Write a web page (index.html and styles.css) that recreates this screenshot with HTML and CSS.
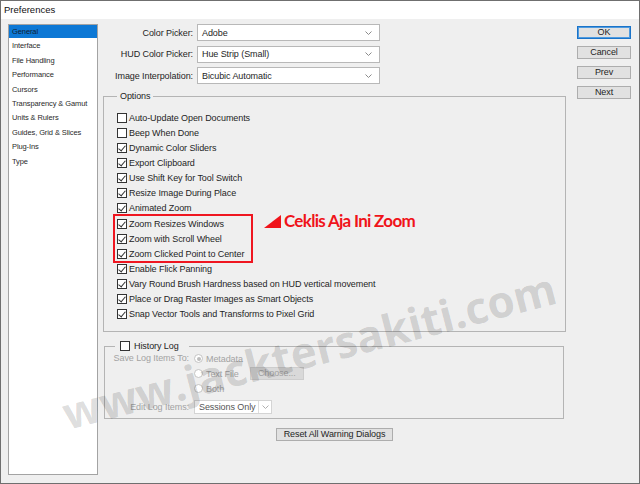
FILE: index.html
```
<!DOCTYPE html>
<html>
<head>
<meta charset="utf-8">
<title>Preferences</title>
<link rel="stylesheet" href="styles.css">
</head>
<body>
<div class="window">
  <div class="titlebar">Preferences</div>
  <div class="body">
    <ul class="nav">
      <li class="sel">General</li>
      <li>Interface</li>
      <li>File Handling</li>
      <li>Performance</li>
      <li>Cursors</li>
      <li>Transparency &amp; Gamut</li>
      <li>Units &amp; Rulers</li>
      <li>Guides, Grid &amp; Slices</li>
      <li>Plug-Ins</li>
      <li>Type</li>
    </ul>
    <div class="main">
      <div class="fields">
        <div class="field"><span class="flabel">Color Picker:</span><div class="select"><span>Adobe</span><svg class="chev" width="7" height="4" viewBox="0 0 7 4"><path d="M0.5 0.5 L3.5 3.5 L6.5 0.5" fill="none" stroke="#8a8a8a" stroke-width="1"/></svg></div></div>
        <div class="field"><span class="flabel">HUD Color Picker:</span><div class="select"><span>Hue Strip (Small)</span><svg class="chev" width="7" height="4" viewBox="0 0 7 4"><path d="M0.5 0.5 L3.5 3.5 L6.5 0.5" fill="none" stroke="#8a8a8a" stroke-width="1"/></svg></div></div>
        <div class="field"><span class="flabel">Image Interpolation:</span><div class="select"><span>Bicubic Automatic</span><svg class="chev" width="7" height="4" viewBox="0 0 7 4"><path d="M0.5 0.5 L3.5 3.5 L6.5 0.5" fill="none" stroke="#8a8a8a" stroke-width="1"/></svg></div></div>
      </div>
      <fieldset class="options">
        <legend>Options</legend>
        <div class="row"><span class="cb"></span>Auto-Update Open Documents</div>
        <div class="row"><span class="cb"></span>Beep When Done</div>
        <div class="row"><span class="cb on"></span>Dynamic Color Sliders</div>
        <div class="row"><span class="cb on"></span>Export Clipboard</div>
        <div class="row"><span class="cb on"></span>Use Shift Key for Tool Switch</div>
        <div class="row"><span class="cb on"></span>Resize Image During Place</div>
        <div class="row"><span class="cb on"></span>Animated Zoom</div>
        <div class="mark">
          <div class="row"><span class="cb on"></span>Zoom Resizes Windows</div>
          <div class="row"><span class="cb on"></span>Zoom with Scroll Wheel</div>
          <div class="row"><span class="cb on"></span>Zoom Clicked Point to Center</div>
          <div class="note"><svg width="18" height="14" viewBox="0 0 18 14"><path d="M0 13 L17 0 L17 13 Z" fill="#f0131a"/></svg><span>Ceklis Aja Ini Zoom</span></div>
        </div>
        <div class="row"><span class="cb on"></span>Enable Flick Panning</div>
        <div class="row"><span class="cb on"></span>Vary Round Brush Hardness based on HUD vertical movement</div>
        <div class="row"><span class="cb on"></span>Place or Drag Raster Images as Smart Objects</div>
        <div class="row"><span class="cb on"></span>Snap Vector Tools and Transforms to Pixel Grid</div>
      </fieldset>
      <fieldset class="history">
        <legend><span class="cb"></span>History Log</legend>
        <div class="hgrid">
          <span class="hlabel">Save Log Items To:</span>
          <div class="radios">
            <div class="rrow"><span class="radio on"></span>Metadata</div>
            <div class="rrow"><span class="radio"></span>Text File<span class="choose">Choose...</span></div>
            <div class="rrow"><span class="radio"></span>Both</div>
          </div>
          <span class="hlabel edit">Edit Log Items:</span>
          <div class="sselect edit"><span>Sessions Only</span><span class="sdrop"><svg width="7" height="4" viewBox="0 0 7 4"><path d="M0.5 0.5 L3.5 3.5 L6.5 0.5" fill="none" stroke="#b0b0b0" stroke-width="1"/></svg></span></div>
        </div>
      </fieldset>
      <div class="resetwrap"><span class="btn reset">Reset All Warning Dialogs</span></div>
    </div>
    <div class="buttons">
      <span class="btn ok">OK</span>
      <span class="btn">Cancel</span>
      <span class="btn">Prev</span>
      <span class="btn">Next</span>
    </div>
  </div>
  <div class="watermark">www.jacktersakiti.com</div>
</div>
</body>
</html>
```
FILE: styles.css
```
* { box-sizing: border-box; }
html, body { margin: 0; padding: 0; }
body {
  width: 640px;
  height: 484px;
  overflow: hidden;
  font-family: "Liberation Sans", Arial, sans-serif;
  font-size: 9px;
  letter-spacing: -0.08px;
  color: #1e1e1e;
}
.window {
  position: relative;
  width: 640px;
  height: 484px;
  border: 1px solid #6f6f6f;
  background: #efefef;
  display: flex;
  flex-direction: column;
  overflow: hidden;
}
.titlebar {
  height: 19px;
  background: #ffffff;
  font-size: 9.5px;
  letter-spacing: 0;
  color: #111;
  padding: 3px 0 0 3px;
  line-height: 12px;
}
.body {
  flex: 1;
  display: flex;
  padding: 5px 8px 8px 7px;
}
.nav {
  list-style: none;
  margin: 0;
  padding: 0;
  width: 90px;
  height: 451px;
  background: #fff;
  border: 1px solid #a3a3a3;
  font-size: 7.5px;
  letter-spacing: -0.1px;
  color: #2a2a2a;
}
.nav li {
  height: 14.4px;
  line-height: 13px;
  padding-left: 3px;
  white-space: nowrap;
}
.nav li.sel {
  background: linear-gradient(#0d78d5 0, #0d78d5 13px, transparent 13px);
  color: #0d1d33;
}
.main {
  width: 463px;
  margin-left: 5px;
  display: flex;
  flex-direction: column;
}
.fields {
  display: flex;
  flex-direction: column;
  gap: 4.5px;
}
.field {
  display: flex;
  align-items: center;
  height: 17px;
}
.flabel {
  width: 90px;
  text-align: right;
  white-space: nowrap;
  margin-right: 4px;
}
.select {
  width: 183px;
  height: 17px;
  background: #fff;
  border: 1px solid #b8b8b8;
  display: flex;
  align-items: center;
  justify-content: space-between;
  padding: 0 7px 0 4px;
}
fieldset {
  margin: 0;
  border: 1px solid #b4b4b4;
  min-inline-size: 0;
}
legend {
  line-height: 12px;
  padding: 0 3px;
}
.options {
  margin-top: 6px;
  padding: 8.5px 0 9.5px 13px;
  width: 463px;
}
.row {
  height: 15px;
  display: flex;
  align-items: center;
  white-space: nowrap;
}
.cb {
  width: 10px;
  height: 10px;
  border: 1px solid #333;
  background: #fff;
  margin-right: 2px;
  flex: none;
  position: relative;
}
.cb.on::after {
  content: "";
  position: absolute;
  left: 2px;
  top: 0px;
  width: 3px;
  height: 6px;
  border-right: 1px solid #333;
  border-bottom: 1px solid #333;
  transform: rotate(40deg);
}
.mark {
  position: relative;
  width: 140px;
  margin: -1.5px 0 -1.5px -4px;
  padding-left: 2px;
  border: 2px solid #ef1620;
}
.note {
  position: absolute;
  left: 149px;
  top: -5px;
  display: flex;
  align-items: flex-end;
  gap: 2px;
  white-space: nowrap;
}
.note svg { margin-bottom: 2px; }
.note span {
  font-family: Lato, "Open Sans", sans-serif;
  font-weight: 700;
  font-size: 17px;
  letter-spacing: -0.7px;
  line-height: 20px;
  color: #f0131a;
}
.history {
  margin: 9px 2px 0 1px;
  padding: 0 0 4px 4px;
  color: #a3a3a3;
}
.history legend {
  margin-left: 6px;
  padding: 0 10px 0 5px;
  line-height: 10px;
  color: #1e1e1e;
  display: flex;
  align-items: center;
}
.history legend .cb { margin-right: 4px; }
.hgrid {
  display: grid;
  grid-template-columns: 80px auto;
  column-gap: 5px;
  align-items: start;
}
.hlabel {
  text-align: right;
  white-space: nowrap;
  line-height: 15px;
}
.hlabel.edit { line-height: 14px; margin-top: 4px; }
.rrow {
  height: 15px;
  display: flex;
  align-items: center;
  white-space: nowrap;
}
.radio {
  width: 9px;
  height: 9px;
  border-radius: 50%;
  border: 1px solid #c4c4c4;
  background: #fff;
  margin-right: 3px;
  position: relative;
}
.radio.on::after {
  content: "";
  position: absolute;
  left: 1.5px;
  top: 1.5px;
  width: 4px;
  height: 4px;
  border-radius: 50%;
  background: #bdbdbd;
}
.choose {
  margin-left: 11px;
  width: 54px;
  height: 13px;
  background: #d9d9d9;
  border: 1px solid #cdcdcd;
  text-align: center;
  line-height: 11px;
  color: #a0a0a0;
}
.sselect {
  margin-top: 4px;
  width: 78px;
  height: 14px;
  background: #fff;
  border: 1px solid #d4d4d4;
  display: flex;
  align-items: center;
  justify-content: space-between;
  color: #555;
  padding-left: 4px;
  white-space: nowrap;
}
.sdrop {
  width: 13px;
  height: 12px;
  border-left: 1px solid #dedede;
  display: flex;
  align-items: center;
  justify-content: center;
}
.resetwrap {
  display: flex;
  justify-content: center;
  margin-top: 9px;
}
.btn {
  display: block;
  height: 13px;
  background: #e1e1e1;
  border: 1px solid #adadad;
  text-align: center;
  line-height: 11px;
  color: #1e1e1e;
}
.reset { width: 117px; }
.buttons {
  width: 54px;
  margin-left: 11px;
  margin-top: 2px;
  display: flex;
  flex-direction: column;
  gap: 7px;
}
.btn.ok { border: 1px solid #1a73c8; box-shadow: inset 0 0 0 1px #4f9be0; }
.watermark {
  position: absolute;
  left: 308px;
  top: 349px;
  transform: translate(-50%, -50%) rotate(-14.5deg);
  font-family: "Open Sans", sans-serif;
  font-weight: 700;
  font-size: 44px;
  letter-spacing: 0;
  color: rgba(0, 0, 0, 0.15);
  white-space: nowrap;
  pointer-events: none;
}
```
